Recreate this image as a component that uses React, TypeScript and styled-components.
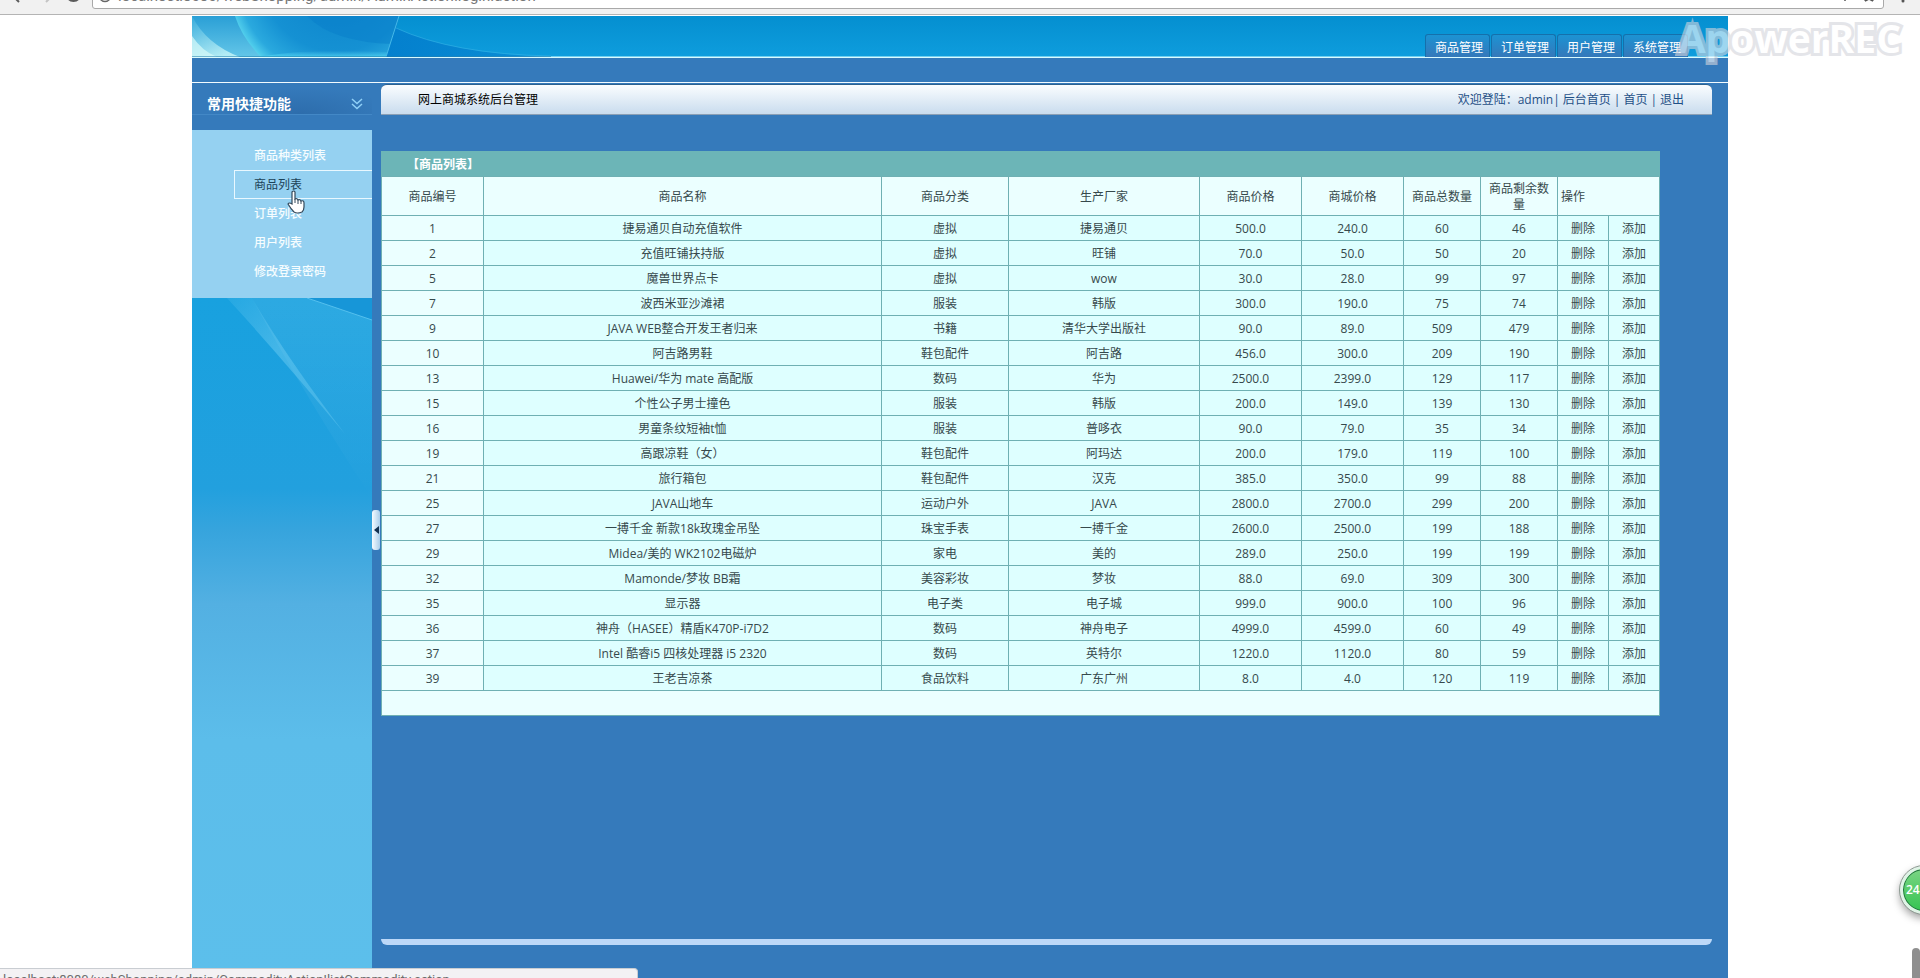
import React from "react";
import styled, { createGlobalStyle } from "styled-components";

const BLUE = "#357abb";
const TEAL = "#6fb0b3";

const GlobalStyle = createGlobalStyle`
  * { box-sizing: border-box; }
  body {
    margin: 0;
    background: #fff;
    font-family: "Open Sans", "Noto Sans CJK SC", sans-serif;
    font-size: 12px;
    line-height: 16px;
  }
  a { color: inherit; text-decoration: none; }
`;

const Screen = styled.div`
  position: relative;
  display: flex;
  flex-direction: column;
  height: 100vh;
  overflow: hidden;
`;

/* Browser toolbar, scrolled almost out of view */
const BrowserBar = styled.div`
  flex: none;
  display: flex;
  align-items: flex-end;
  height: 15px;
  overflow: hidden;
  background: #f1f1f1;
  border-bottom: 1px solid #b4b4b4;
`;

const BrowserIcons = styled.svg`
  flex: none;
  width: 92px;
  height: 14px;
`;

const UrlBox = styled.label`
  flex: 1;
  display: flex;
  align-items: flex-end;
  height: 32px;
  margin-bottom: 5px;
  border: 1px solid #a9a9a9;
  border-radius: 3px;
  background: #fff;
`;

const UrlInput = styled.input`
  flex: 1;
  height: 20px;
  margin-bottom: 2px;
  padding: 0;
  border: 0;
  outline: 0;
  background: none;
  color: #777;
  font: 15px/20px Roboto, sans-serif;
`;

const UrlIcon = styled.svg`
  flex: none;
  width: 25px;
  height: 9px;
`;

const StarIcon = styled.svg`
  flex: none;
  width: 46px;
  height: 9px;
`;

const MenuDots = styled.svg`
  flex: none;
  width: 36px;
  height: 14px;
`;

const Page = styled.div`
  flex: 1;
  display: flex;
  flex-direction: column;
  width: 80%;
  margin: 1px auto 0;
  background: ${BLUE};
`;

const Banner = styled.header`
  position: relative;
  display: flex;
  justify-content: flex-end;
  align-items: flex-end;
  height: 42px;
  padding-right: 40px;
  background: linear-gradient(#058fd0, #0e9ddd);
  border-bottom: 1px solid #d9fbff;
  box-shadow: inset 0 -1px #6fd0f2;
`;

const BannerArt = styled.svg`
  position: absolute;
  left: 0;
  top: 0;
  width: 359px;
  height: 41px;
`;

const Tabs = styled.nav`
  display: flex;
  gap: 1px;
`;

const Tab = styled.a`
  width: 65px;
  height: 23px;
  padding-left: 3px;
  text-align: center;
  line-height: 25px;
  color: #fff;
  border: 1px solid #1570ab;
  border-bottom: 0;
  border-radius: 3px 3px 0 0;
  background: linear-gradient(#1c93d3, #3578ba);
`;

const Strip = styled.div`
  height: 25px;
  border-bottom: 1px solid #f2fbff;
`;

const Body = styled.div`
  flex: 1;
  display: flex;
  min-height: 0;
`;

const Sidebar = styled.aside`
  flex: none;
  display: flex;
  flex-direction: column;
  width: 180px;
`;

const SideHeading = styled.h2`
  display: flex;
  align-items: center;
  justify-content: space-between;
  height: 32px;
  margin: 0 0 15px;
  padding: 11px 9px 0 15px;
  color: #fff;
  font-size: 14px;
  line-height: 20px;
  background: radial-gradient(ellipse at 60% 100%, #2d6dac, ${BLUE} 60%);
  border-bottom: 1px solid #4388c6;
`;

const SideMenu = styled.ul`
  margin: 0;
  padding: 11px 0 12px 42px;
  list-style: none;
  background: #95d1f1;
`;

const SideLink = styled.a<{ $active?: boolean }>`
  display: block;
  height: 29px;
  padding-left: 19px;
  line-height: 27px;
  font-weight: ${(p) => (p.$active ? 400 : 500)};
  color: ${(p) => (p.$active ? "#1c4258" : "#f6fdff")};
  border: 1px solid ${(p) => (p.$active ? "#e9f8ff" : "transparent")};
  border-right: 0;
`;

const SideArt = styled.svg`
  flex: 1;
  display: block;
  width: 100%;
  min-height: 0;
`;

const Gutter = styled.div`
  flex: none;
  width: 9px;
  padding-top: 427px;
`;

const Handle = styled.button`
  display: flex;
  align-items: center;
  justify-content: center;
  width: 8px;
  height: 40px;
  padding: 0;
  border: 0;
  border-radius: 3px;
  background: linear-gradient(90deg, #f5fbff, #a9cdea);
`;

const Main = styled.main`
  flex: 1;
  display: flex;
  flex-direction: column;
  min-width: 0;
  margin: 1px 16px 33px 0;
`;

const TitleBar = styled.div`
  display: flex;
  justify-content: space-between;
  align-items: center;
  height: 31px;
  padding: 0 28px 0 37px;
  border-top: 1px solid #2b618f;
  border-bottom: 1px solid #8a9fb5;
  border-radius: 6px 6px 0 0;
  background: linear-gradient(#fafdff, #c9dcee);
`;

const PageTitle = styled.h1`
  margin: 0;
  font-size: 12px;
  font-weight: 400;
  color: #000;
`;

const UserLinks = styled.div`
  display: flex;
  gap: 3px;
  color: #1f4f86;
`;

const GoodsTable = styled.table`
  width: calc(100% - 52px);
  margin-top: 36px;
  table-layout: fixed;
  border-collapse: separate;
  border-spacing: 1px;
  background: ${TEAL};
  color: #36494c;
  text-align: center;
`;

const Caption = styled.caption`
  height: 25px;
  padding-left: 26px;
  background: #6cb5b7;
  color: #fff;
  font-weight: 700;
  line-height: 27px;
  text-align: left;
`;

const HeadCell = styled.th<{ $left?: boolean }>`
  height: 38px;
  padding: 2px ${(p) => (p.$left ? 3 : 6)}px 0;
  font-weight: 400;
  text-align: ${(p) => (p.$left ? "left" : "center")};
  background: #ebffff;
`;

const Cell = styled.td<{ $pale?: boolean }>`
  height: 24px;
  padding: 2px 0 0;
  background: ${(p) => (p.$pale ? "#ebffff" : "#deffff")};
`;

const BottomBar = styled.div`
  height: 6px;
  margin-top: auto;
  border-radius: 0 0 6px 6px;
  background: #bcd8f8;
`;

const StatusBar = styled.div`
  position: absolute;
  left: 0;
  bottom: -12px;
  width: 638px;
  height: 22px;
  padding: 2px 3px;
  border: 1px solid #c9cdd2;
  border-left: 0;
  border-radius: 0 4px 0 0;
  background: #f3f2f4;
  color: #6d6d6d;
  font: 13px/18px Roboto, sans-serif;
`;

const Watermark = styled.div`
  position: absolute;
  right: 19px;
  top: 14px;
  font: 700 39px/48px "Open Sans", sans-serif;
  color: #fff;
  opacity: 0.6;
  paint-order: stroke fill;
  -webkit-text-stroke: 6px #d3d4dc;
`;

const Badge = styled.div`
  position: absolute;
  right: -28px;
  top: 866px;
  width: 48px;
  height: 48px;
  padding-left: 3px;
  border: 3px solid #dff3e6;
  border-radius: 50%;
  outline: 1px solid #8d9a92;
  background: linear-gradient(#7bd584, #35c452);
  box-shadow: inset 0 0 0 1px #22713e, 0 4px 8px rgba(0, 0, 0, 0.4);
  color: #fff;
  font-size: 12px;
  font-weight: 600;
  line-height: 42px;
`;

const ScrollThumb = styled.div`
  position: absolute;
  right: 0;
  bottom: 0;
  width: 8px;
  height: 30px;
  border-radius: 4px 4px 0 0;
  background: #8f8f8f;
`;

const HandCursor = styled.svg`
  position: absolute;
  left: 286px;
  top: 190px;
  width: 20px;
  height: 24px;
`;

const headings = ["商品编号", "商品名称", "商品分类", "生产厂家", "商品价格", "商城价格", "商品总数量", "商品剩余数量"];

/* The name column has no width of its own and takes what is left. */
const widths = ["101px", "auto", "126px", "190px", "101px", "101px", "76px", "76px", "50px", "50px"];

const goods = [
  ["1", "捷易通贝自动充值软件", "虚拟", "捷易通贝", "500.0", "240.0", "60", "46"],
  ["2", "充值旺铺扶持版", "虚拟", "旺铺", "70.0", "50.0", "50", "20"],
  ["5", "魔兽世界点卡", "虚拟", "wow", "30.0", "28.0", "99", "97"],
  ["7", "波西米亚沙滩裙", "服装", "韩版", "300.0", "190.0", "75", "74"],
  ["9", "JAVA WEB整合开发王者归来", "书籍", "清华大学出版社", "90.0", "89.0", "509", "479"],
  ["10", "阿吉路男鞋", "鞋包配件", "阿吉路", "456.0", "300.0", "209", "190"],
  ["13", "Huawei/华为 mate 高配版", "数码", "华为", "2500.0", "2399.0", "129", "117"],
  ["15", "个性公子男士撞色", "服装", "韩版", "200.0", "149.0", "139", "130"],
  ["16", "男童条纹短袖t恤", "服装", "普哆衣", "90.0", "79.0", "35", "34"],
  ["19", "高跟凉鞋（女）", "鞋包配件", "阿玛达", "200.0", "179.0", "119", "100"],
  ["21", "旅行箱包", "鞋包配件", "汉克", "385.0", "350.0", "99", "88"],
  ["25", "JAVA山地车", "运动户外", "JAVA", "2800.0", "2700.0", "299", "200"],
  ["27", "一搏千金 新款18k玫瑰金吊坠", "珠宝手表", "一搏千金", "2600.0", "2500.0", "199", "188"],
  ["29", "Midea/美的 WK2102电磁炉", "家电", "美的", "289.0", "250.0", "199", "199"],
  ["32", "Mamonde/梦妆 BB霜", "美容彩妆", "梦妆", "88.0", "69.0", "309", "300"],
  ["35", "显示器", "电子类", "电子城", "999.0", "900.0", "100", "96"],
  ["36", "神舟（HASEE）精盾K470P-i7D2", "数码", "神舟电子", "4999.0", "4599.0", "60", "49"],
  ["37", "Intel 酷睿i5 四核处理器 i5 2320", "数码", "英特尔", "1220.0", "1120.0", "80", "59"],
  ["39", "王老吉凉茶", "食品饮料", "广东广州", "8.0", "4.0", "120", "119"],
];

const menu = ["商品种类列表", "商品列表", "订单列表", "用户列表", "修改登录密码"];

export default function App() {
  return (
    <Screen>
      <GlobalStyle />
      <BrowserBar>
        <BrowserIcons viewBox="0 0 92 14" fill="none" stroke="#5b5b5b" strokeWidth="2">
          <path d="M13 -4L19 2" />
          <path d="M46 2L51 -3" stroke="#c4c4c4" />
          <path d="M68 -2a6 5 0 0 0 11 0" />
        </BrowserIcons>
        <UrlBox>
          <UrlIcon viewBox="0 0 25 9" fill="none" stroke="#666" strokeWidth="1.5">
            <path d="M7 -2a5 4.500 0 0 0 10 0" />
          </UrlIcon>
          <UrlInput aria-label="地址" readOnly value="localhost:8080/webShopping/admin/AdminAction!login.action" />
          <StarIcon viewBox="0 0 46 9" fill="none" stroke="#555" strokeWidth="1.500">
            <path d="M8 0V2" />
            <path d="M28 2L29 -1M36 2L35 -1M28 2L32 0L36 2" />
          </StarIcon>
        </UrlBox>
        <MenuDots viewBox="0 0 36 14">
          <circle cx="19" cy="1" r="1.500" fill="#555" />
        </MenuDots>
      </BrowserBar>

      <Page>
        <Banner>
          <BannerArt viewBox="0 0 359 41" preserveAspectRatio="none">
            <defs>
              <linearGradient id="glow" x1="0" x2=".6" y1="0" y2="1">
                <stop offset="0" stopColor="#3aaedd" />
                <stop offset="1" stopColor="#c9f7f8" />
              </linearGradient>
              <linearGradient id="veil" x1="0" x2="0" y1="0" y2="1">
                <stop offset="0" stopColor="#2a9fd6" />
                <stop offset="1" stopColor="#63c6e8" />
              </linearGradient>
              <radialGradient id="lens" gradientUnits="userSpaceOnUse" cx="145" cy="-40" r="116">
                <stop offset="0" stopColor="#0a80c9" />
                <stop offset=".65" stopColor="#1591d3" />
                <stop offset=".86" stopColor="#2aa9de" />
                <stop offset=".94" stopColor="#4cc9ea" />
                <stop offset="1" stopColor="#70edf3" />
              </radialGradient>
              <linearGradient id="rim" x1="0" x2="0" y1="0" y2="1">
                <stop offset="0" stopColor="#57d2f2" stopOpacity="0" />
                <stop offset="1" stopColor="#57dcf4" />
              </linearGradient>
              <linearGradient id="deep" x1="0" x2="1">
                <stop offset="0" stopColor="#0480ce" />
                <stop offset="1" stopColor="#0480ce" stopOpacity=".5" />
              </linearGradient>
            </defs>
            <path d="M0 0H45Q52 25 70 41H0Z" fill="url(#veil)" />
            <path d="M0 0Q14 28 48 41H0Z" fill="url(#glow)" opacity=".8" />
            <path d="M0 20Q10 35 25 41H0Z" fill="#d8fbfa" opacity=".7" />
            <path d="M43 0H207L194 41H69Q50 22 43 0Z" fill="url(#lens)" />
            <path d="M69 41Q110 32 197 36L194 41Z" fill="url(#rim)" opacity=".7" />
            <path d="M115 0Q140 26 201 28L207 0Z" fill="#087ec9" opacity=".5" />
            <path d="M207 0L194 41H359Q260 38 204 12Z" fill="url(#deep)" />
            <path d="M204 12Q260 38 359 40" fill="none" stroke="#35b2e6" opacity=".6" />
            <path d="M207 0L194 41" stroke="#46b9e8" />
            <path d="M0 40.500H359" stroke="#1c78a8" opacity=".5" />
          </BannerArt>
          <Tabs>
            <Tab href="#goods">商品管理</Tab>
            <Tab href="#orders">订单管理</Tab>
            <Tab href="#users">用户管理</Tab>
            <Tab href="#system">系统管理</Tab>
          </Tabs>
        </Banner>
        <Strip />
        <Body>
          <Sidebar>
            <SideHeading>
              常用快捷功能
              <svg width="12" height="12" viewBox="0 0 12 12" fill="none" stroke="#8fd0f7" strokeWidth="1.500">
                <path d="M1 1L6 5.500L11 1M1 6L6 10.500L11 6" />
              </svg>
            </SideHeading>
            <SideMenu>
              {menu.map((m, i) => (
                <li key={m}>
                  <SideLink href={`#menu-${i}`} $active={i === 1}>{m}</SideLink>
                </li>
              ))}
            </SideMenu>
            <SideArt viewBox="0 0 180 680" preserveAspectRatio="none">
              <defs>
                <linearGradient id="side" x1="0" x2="0" y1="0" y2="1">
                  <stop offset="0" stopColor="#18a1df" />
                  <stop offset=".28" stopColor="#22a0de" />
                  <stop offset=".34" stopColor="#36a4dd" />
                  <stop offset=".45" stopColor="#53b0e2" />
                  <stop offset=".65" stopColor="#5cbdea" />
                  <stop offset="1" stopColor="#5cbfeb" />
                </linearGradient>
                <linearGradient id="haze" x1="0" x2="0" y1="0" y2="1">
                  <stop offset="0" stopColor="#fff" stopOpacity=".09" />
                  <stop offset="1" stopColor="#fff" stopOpacity="0" />
                </linearGradient>
                <linearGradient id="beam" x1="0" x2="1" y1="0" y2="1">
                  <stop offset="0" stopColor="#5cc4ef" stopOpacity=".2" />
                  <stop offset=".4" stopColor="#6ccbf1" stopOpacity=".5" />
                  <stop offset="1" stopColor="#6ccbf1" stopOpacity=".4" />
                </linearGradient>
              </defs>
              <path d="M0 0H180V680H0Z" fill="url(#side)" />
              <path d="M60 0H115L180 22V200Q120 110 60 0Z" fill="url(#haze)" />
              <path d="M115 0L180 22V0Z" fill="#1796d8" />
              <path d="M115 0L180 22" stroke="#55c0ee" />
              <path d="M35 0H60Q95 60 153 136Q90 60 35 0Z" fill="url(#beam)" />
            </SideArt>
          </Sidebar>

          <Gutter>
            <Handle aria-label="收起菜单">
              <svg width="5" height="8" viewBox="0 0 5 8">
                <path d="M5 0V8L0 4Z" fill="#12304f" />
              </svg>
            </Handle>
          </Gutter>

          <Main>
            <TitleBar>
              <PageTitle>网上商城系统后台管理</PageTitle>
              <UserLinks>
                <span>欢迎登陆：admin|</span>
                <a href="#admin-home">后台首页</a>
                <span>|</span>
                <a href="#home">首页</a>
                <span>|</span>
                <a href="#logout">退出</a>
              </UserLinks>
            </TitleBar>
            <GoodsTable>
              <Caption>【商品列表】</Caption>
              <colgroup>
                {widths.map((w, i) => (
                  <col key={i} style={{ width: w }} />
                ))}
              </colgroup>
              <thead>
                <tr>
                  {headings.map((h) => (
                    <HeadCell key={h}>{h}</HeadCell>
                  ))}
                  <HeadCell colSpan={2} $left>操作</HeadCell>
                </tr>
              </thead>
              <tbody>
                {goods.map((row) => (
                  <tr key={row[0]}>
                    {row.map((value, i) => (
                      <Cell key={i} $pale={i === 0}>{value}</Cell>
                    ))}
                    <Cell><a href={`#delete-${row[0]}`}>删除</a></Cell>
                    <Cell><a href={`#add-${row[0]}`}>添加</a></Cell>
                  </tr>
                ))}
              </tbody>
              <tfoot>
                <tr>
                  <Cell colSpan={10} $pale />
                </tr>
              </tfoot>
            </GoodsTable>
            <BottomBar />
          </Main>
        </Body>
      </Page>

      <HandCursor viewBox="0 0 20 24">
        <path
          d="M6 2Q8 0 9 2V9Q11 8 12 10Q14 9 15 11Q18 10 18 13V17Q18 20 16 22Q11 24 8 22Q5 19 2 14Q3 12 6 14Z"
          fill="#fff"
          stroke="#33485a"
          strokeWidth="1.200"
        />
        <path d="M9 9V13M12 10V14M15 11V14" stroke="#33485a" />
      </HandCursor>
      <Watermark>ApowerREC</Watermark>
      <Badge>24</Badge>
      <ScrollThumb />
      <StatusBar>localhost:8080/webShopping/admin/CommodityAction!listCommodity.action</StatusBar>
    </Screen>
  );
}
